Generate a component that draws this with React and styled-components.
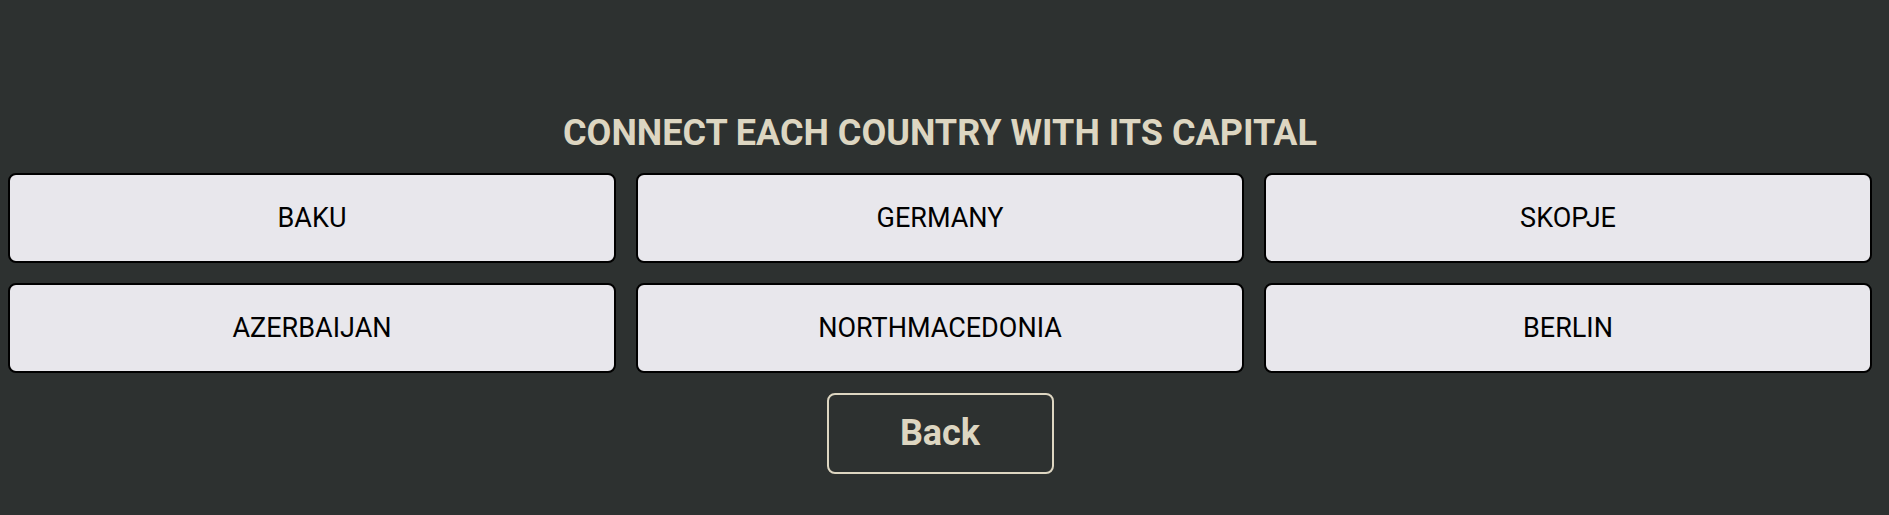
import styled, { createGlobalStyle } from "styled-components";

const GlobalStyle = createGlobalStyle`
    body {
        margin: 0;
        background-color: #2d3130;
        font-family: Roboto, "Liberation Sans", sans-serif;
    }
`;

const Page = styled.div`
    display: flex;
    flex-direction: column;
    align-items: center;
    gap: 20px;
    padding: 113px 17px 0 8px;
`;

const Title = styled.h1`
    margin: 0;
    font-size: 36px;
    font-weight: 700;
    line-height: 40px;
    color: #ddd6c1;
    text-transform: uppercase;
`;

const Board = styled.div`
    width: 100%;
    display: grid;
    grid-template-columns: repeat(3, 1fr);
    gap: 20px;
`;

const Tile = styled.button`
    height: 90px;
    box-sizing: border-box;
    border: 2px solid #000;
    border-radius: 8px;
    background-color: #e8e7ec;
    color: #000;
    font-family: Roboto, "Liberation Sans", sans-serif;
    font-size: 27px;
    cursor: pointer;
`;

const BackButton = styled.button`
    width: 227px;
    height: 81px;
    box-sizing: border-box;
    padding-bottom: 3px;
    border: 2px solid #ddd6c1;
    border-radius: 8px;
    background: transparent;
    color: #ddd6c1;
    font-family: Roboto, "Liberation Sans", sans-serif;
    font-size: 36px;
    font-weight: 700;
    cursor: pointer;
`;

const tiles = ["BAKU", "GERMANY", "SKOPJE", "AZERBAIJAN", "NORTHMACEDONIA", "BERLIN"];

export default function App() {
    return (
        <>
            <GlobalStyle />
            <Page>
                <Title>Connect each country with its capital</Title>
                <Board>
                    {tiles.map((name) => (
                        <Tile key={name}>{name}</Tile>
                    ))}
                </Board>
                <BackButton>Back</BackButton>
            </Page>
        </>
    );
}
